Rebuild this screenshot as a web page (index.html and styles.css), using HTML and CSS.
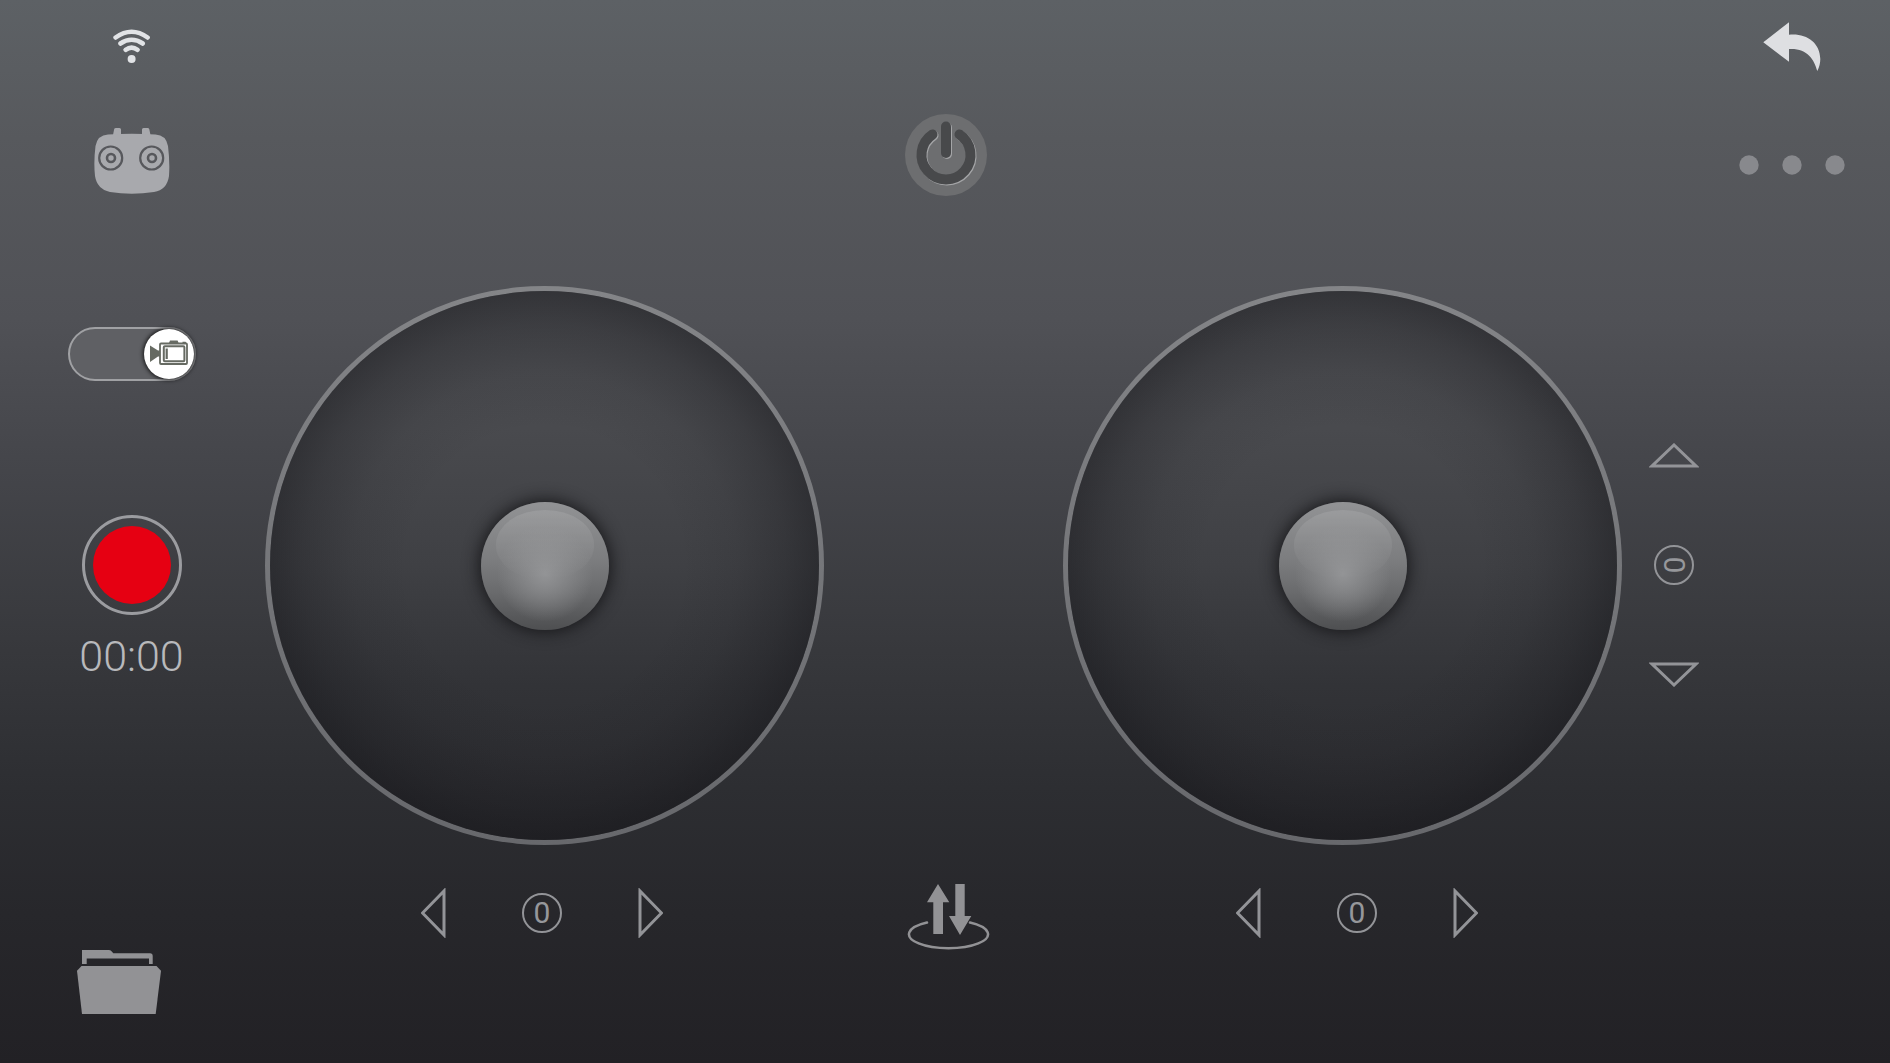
FILE: index.html
```
<!DOCTYPE html>
<html lang="en">
<head>
    <meta charset="UTF-8">
    <meta name="viewport" content="width=device-width, initial-scale=1.0">
    <title>Drone Remote</title>
    <link rel="stylesheet" href="styles.css">
</head>
<body>
    <main class="remote">
        <!-- Left column: status, camera, record, files -->
        <div class="camera-panel">
            <svg class="wifi" width="40" height="36" viewBox="0 0 40 36" role="img" aria-label="Wi-Fi">
                <g fill="none" stroke="#e1e3e6" stroke-width="4.6" stroke-linecap="round">
                    <path d="M3.6 9.5Q19.6 -2 35.6 9.5"/>
                    <path d="M8.4 15.5Q19.6 8 30.8 15.5"/>
                    <path d="M13.6 21.8Q19.6 17.6 25.6 21.8"/>
                </g>
                <circle cx="19.6" cy="31" r="4" fill="#e1e3e6"/>
            </svg>
            <button class="icon-button controller" aria-label="Controller">
                <svg width="78" height="68" viewBox="0 0 78 68">
                    <path fill="#a8a9ad" d="M20 8L21.2 2Q21.5 1 23 1H26.5Q28 1 28 2.5V8ZM49 8V2.5Q49 1 50.5 1H54.5Q56 1 56.3 2.2L57.5 8Z"/>
                    <path fill="#a8a9ad" d="M15 7.5Q38.5 6 62.5 7.5Q73 8 75 19Q77 35 76 49Q74 63 61 65Q38.5 68.5 17 65Q4 62 2 49Q.5 35 2.5 19Q4.5 8 15 7.5Z"/>
                    <g fill="none" stroke="#57585c" stroke-width="2.2">
                        <circle cx="17.7" cy="31" r="11.5"/>
                        <circle cx="58.7" cy="31" r="11.5"/>
                        <circle cx="18" cy="31" r="4" stroke-width="2.6"/>
                        <circle cx="59" cy="31" r="4" stroke-width="2.6"/>
                    </g>
                </svg>
            </button>
            <label class="mode-switch">
                <input type="checkbox" role="switch" aria-label="Video mode" checked>
                <span class="thumb">
                    <svg width="50" height="50" viewBox="0 0 50 50">
                        <g fill="#666a62">
                            <path d="M6 16.5L14 21.5H16V27.5H14L6 33Z"/>
                            <path d="M25 14L26 11.5H33.6L34.6 14ZM38.5 14V12.7H41.5L42.5 14Z"/>
                        </g>
                        <g fill="none" stroke="#666a62">
                            <rect x="16" y="14.5" width="27" height="20.5" rx="1" stroke-width="1.8"/>
                            <rect x="19.8" y="17.3" width="20.6" height="15" rx="1" stroke-width="2"/>
                            <path d="M22.7 19.5V30" stroke-width="2.2"/>
                        </g>
                    </svg>
                </span>
            </label>
            <button class="record" aria-label="Record"></button>
            <time class="timer">00:00</time>
            <button class="icon-button folder" aria-label="Files">
                <svg width="84" height="64" viewBox="0 0 84 64" fill="#929295">
                    <path d="M5 0H32Q34 0 35 1.8L36.3 3.3H73Q75.7 3.3 75.7 6V14H72V8.5H9.7V14H5Z"/>
                    <path d="M4.5 16H79.5L84 20.7L78.7 64H5L0 20.7Z"/>
                </svg>
            </button>
        </div>

        <!-- Left stick -->
        <div class="stick">
            <div class="joystick">
                <button class="knob" aria-label="Left stick"></button>
            </div>
            <div class="trim trim-left">
                <button class="icon-button" aria-label="Trim left">
                    <svg width="25" height="50" viewBox="0 0 25 50"><path class="line" d="M23 3V47L1.5 25Z"/></svg>
                </button>
                <output class="trim-value">0</output>
                <button class="icon-button" aria-label="Trim right">
                    <svg width="25" height="50" viewBox="0 0 25 50"><path class="line" d="M2 3V47L23.5 25Z"/></svg>
                </button>
            </div>
        </div>

        <!-- Power and takeoff -->
        <div class="flight-panel">
            <button class="icon-button" aria-label="Power">
                <svg width="82" height="82" viewBox="0 0 82 82">
                    <circle cx="41" cy="41" r="41" fill="#6d6e70"/>
                    <g fill="none" stroke="#a4a5a7" stroke-width="10" stroke-linecap="round" transform="translate(1 1)">
                        <path d="M27.5 20.5A24.5 24.5 0 1 0 54.5 20.5"/>
                        <path d="M41 12.5V39"/>
                    </g>
                    <g fill="none" stroke="#48494b" stroke-width="10" stroke-linecap="round">
                        <path d="M27.5 20.5A24.5 24.5 0 1 0 54.5 20.5"/>
                        <path d="M41 12.5V39"/>
                    </g>
                </svg>
            </button>
            <button class="icon-button takeoff" aria-label="Take off or land">
                <svg width="88" height="70" viewBox="-2 0 88 70">
                    <path fill="#929295" d="M34 2L45.3 20.3H39V52H29.3V20.3H23ZM51.3 2H60.7V34H67.3L56 53L45 34H51.3Z"/>
                    <path fill="none" stroke="#929295" stroke-width="2.5" stroke-linecap="round" d="M23 40.5A39.5 14 0 1 0 66 40.5"/>
                </svg>
            </button>
        </div>

        <!-- Right stick -->
        <div class="stick">
            <div class="joystick">
                <button class="knob" aria-label="Right stick"></button>
            </div>
            <div class="trim trim-right">
                <button class="icon-button" aria-label="Trim left">
                    <svg width="25" height="50" viewBox="0 0 25 50"><path class="line" d="M23 3V47L1.5 25Z"/></svg>
                </button>
                <output class="trim-value">0</output>
                <button class="icon-button" aria-label="Trim right">
                    <svg width="25" height="50" viewBox="0 0 25 50"><path class="line" d="M2 3V47L23.5 25Z"/></svg>
                </button>
            </div>
        </div>

        <!-- Right column: navigation and pitch trim -->
        <div class="nav-panel">
            <nav class="nav">
                <a class="icon-button" href="#" aria-label="Back">
                    <svg width="60" height="52" viewBox="0 0 60 52">
                        <path fill="#dedfe2" d="M1.3 21.3L27 1.3V13.7C44 12 58 21 58.3 38C58.3 42 57.4 46 55.3 50C52 38 45 27 27 28V40.7Z"/>
                    </svg>
                </a>
                <button class="icon-button" aria-label="More">
                    <svg width="106" height="20" viewBox="0 0 106 20" fill="#88898d">
                        <circle cx="10" cy="10" r="9.7"/>
                        <circle cx="53" cy="10" r="9.7"/>
                        <circle cx="96" cy="10" r="9.7"/>
                    </svg>
                </button>
            </nav>
            <div class="trim trim-vertical">
                <button class="icon-button" aria-label="Trim up">
                    <svg width="50" height="25" viewBox="0 0 50 25"><path class="line" d="M3 23H47L25 2Z"/></svg>
                </button>
                <output class="trim-value">0</output>
                <button class="icon-button" aria-label="Trim down">
                    <svg width="50" height="25" viewBox="0 0 50 25"><path class="line" d="M3 2H47L25 23Z"/></svg>
                </button>
            </div>
        </div>
    </main>
</body>
</html>
```
FILE: styles.css
```
* {
    box-sizing: border-box;
}

body {
    margin: 0;
    font-family: Roboto, "Liberation Sans", sans-serif;
    color: #96979b;
}

button {
    padding: 0;
    border: none;
    background: none;
    cursor: pointer;
}

svg {
    display: block;
}

.icon-button {
    display: block;
}

.line {
    fill: none;
    stroke: #939498;
    stroke-width: 3px;
}

.remote {
    display: grid;
    grid-template-columns: 265fr 559fr 239fr 559fr 268fr;
    min-height: 100vh;
    background: linear-gradient(#5d6165 0%, #57595d 13%, #505156 30%, #45464b 43%, #38393d 60%, #2d2e32 74%, #27272b 86%, #222125 100%);
}

/* Left column */
.camera-panel {
    display: flex;
    flex-direction: column;
    align-items: center;
    padding: 28px 2px 49px 0;
}

.controller {
    margin-top: 63px;
}

.mode-switch {
    display: grid;
    align-items: center;
    margin-top: 132px;
    cursor: pointer;
}

.mode-switch input {
    grid-area: 1 / 1;
    appearance: none;
    width: 128px;
    height: 54px;
    margin: 0;
    border: 2px solid #a0a1a4;
    border-radius: 27px;
    background-color: #5f6064;
}

.thumb {
    grid-area: 1 / 1;
    justify-self: start;
    margin: 0 2px;
    border-radius: 50%;
    background-color: white;
    box-shadow: 0 0 4px 1px rgba(0, 0, 0, 0.8);
}

.mode-switch input:checked + .thumb {
    justify-self: end;
}

.record {
    width: 100px;
    height: 100px;
    margin-top: 134px;
    padding: 8px;
    border: 3px solid #9b9ca0;
    border-radius: 50%;
    background: #e60012 content-box;
}

.timer {
    margin-top: 17px;
    font-size: 43px;
    font-weight: 300;
    line-height: 48px;
    color: #b8b9bc;
}

.folder {
    align-self: flex-start;
    margin-top: auto;
    margin-left: 77px;
}

/* Sticks */
.stick {
    padding-top: 286px;
}

.joystick {
    display: grid;
    place-items: center;
    aspect-ratio: 1;
    border: 5px solid transparent;
    border-radius: 50%;
    background:
        radial-gradient(closest-side, transparent 50%, rgba(18, 18, 22, 0.08) 70%, rgba(18, 18, 22, 0.25) 88%, rgba(18, 18, 22, 0.42) 100%) padding-box,
        linear-gradient(#4b4c50 0%, #494a4e 25%, #3f4044 50%, #323337 72%, #28282c 100%) padding-box,
        linear-gradient(#848588, #67686c) border-box;
}

.knob {
    position: relative;
    width: 128px;
    height: 128px;
    border-radius: 50%;
    background:
        radial-gradient(circle at 50% 56%, #929395 0%, rgba(146, 147, 149, 0) 50%),
        linear-gradient(#929395 0%, #7c7d7f 45%, #6a6b6d 70%, #4e4f51 100%);
    box-shadow: 0 0 16px 2px rgba(18, 18, 20, 0.85);
}

/* Glossy highlight */
.knob::before {
    content: "";
    position: absolute;
    top: 7%;
    left: 12%;
    width: 77%;
    height: 54%;
    border-radius: 50%;
    background: linear-gradient(rgba(255, 255, 255, 0.1), rgba(255, 255, 255, 0.06) 50%, rgba(255, 255, 255, 0));
}

.trim {
    display: flex;
    align-items: center;
    justify-content: space-between;
    width: 242px;
}

.trim-left,
.trim-right {
    margin: 43px auto 0 156px;
}

.trim-right {
    margin-left: 173px;
}

.trim-value {
    display: grid;
    place-items: center;
    width: 40px;
    height: 40px;
    border: 2px solid #939498;
    border-radius: 50%;
    font-size: 30px;
    line-height: 36px;
}

/* Center column */
.flight-panel {
    display: flex;
    flex-direction: column;
    align-items: center;
    padding: 114px 0 111px 4px;
}

.takeoff {
    margin-top: auto;
}

/* Right column */
.nav-panel {
    display: flex;
    flex-direction: column;
    padding-top: 21px;
}

.nav {
    display: flex;
    flex-direction: column;
    align-items: center;
    align-self: flex-end;
    gap: 82px;
    margin-right: 45px;
}

.trim-vertical {
    flex-direction: column;
    width: 50px;
    height: 244px;
    margin-top: 268px;
    margin-left: 27px;
}

.trim-vertical .trim-value {
    transform: rotate(90deg);
}
```
